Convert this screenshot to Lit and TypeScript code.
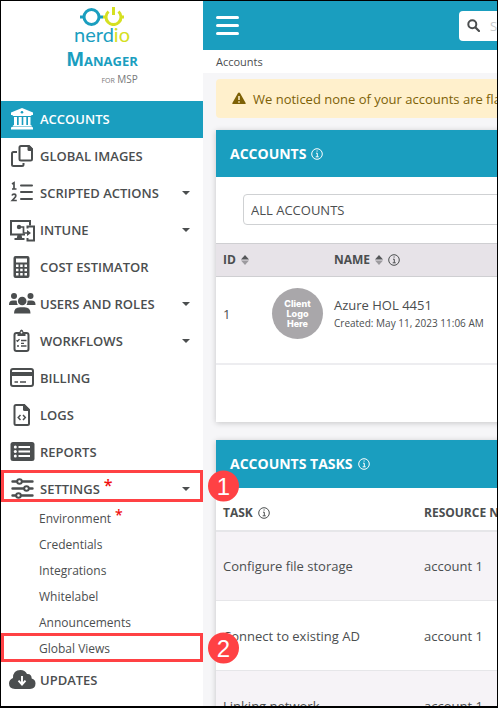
import { LitElement, html, svg, css, nothing } from "lit";
import { customElement, state } from "lit/decorators.js";
import { classMap } from "lit/directives/class-map.js";

const TEAL = "#1a9ebf";
const LIME = "#d5e021";

const icons: Record<string, unknown> = {
  bank: svg`<path fill="currentColor" d="M13 2 L24 6.6 V9 H22.5 Q22.5 10 21.6 10 H4.4 Q3.500 10 3.500 9 H2 V6.600 Z"/>
    <circle cx="13" cy="6.300" r="1.300" fill="#1a9ebf"/>
    <path fill="currentColor" d="M5 11h3v8h1.700v-8h3v8h1.600v-8h3v8h1.700v-8h2.500v8q1.500 0 1.500 1.500H3.600Q3.600 19 5 19ZM3 21h20q1 0 1 1v1.500H2V22q0-1 1-1Z"/>`,
  copy: svg`<g fill="none" stroke="currentColor" stroke-width="2" stroke-linejoin="round">
    <path d="M12 3h8l3 3v10q0 1.500-1.500 1.500H12q-1.500 0-1.500-1.500V4.500Q10.500 3 12 3Z"/>
    <path d="M8 9H4.500Q3 9 3 10.500v11Q3 23 4.500 23H13q1.500 0 1.500-1.500V20"/></g>
    <path fill="currentColor" d="M18.500 2.500h2L24 6v2h-4q-1.500 0-1.500-1.500Z"/>`,
  list: svg`<path d="M12 5.500h11M12 12h11M12 19h11" stroke="currentColor" stroke-width="2" stroke-linecap="round"/>
    <path d="M3 4l2-1.200v6M3 9h4.500M3 15.500q.500-1.300 2-1.300 1.800 0 1.800 1.600 0 1-1.300 2.200L3.300 20.500h4.500" fill="none" stroke="currentColor" stroke-width="1.700"/>`,
  devices: svg`<g fill="none" stroke="currentColor" stroke-width="2"><path d="M16 17.500H2V4h19v4.500"/><path d="M18.500 11.500V9.500H25V23.500h-6.500V21"/></g>
    <path d="M10 10h4.500v6h4" fill="none" stroke="currentColor" stroke-width="1.700"/>
    <circle cx="10" cy="10" r="2.200" fill="currentColor"/><path fill="currentColor" d="M18 13l4 3-4 3ZM8.500 18h4l.700 3h2.300v2H5.500v-2h2.300Z"/>`,
  calc: svg`<path fill="currentColor" fill-rule="evenodd" d="M6.500 2h12q2 0 2 2v18q0 2-2 2h-12q-2 0-2-2V4q0-2 2-2ZM7 4.500v4h11v-4ZM7 10.500V13h2.500v-2.500ZM11.200 10.500V13h2.500v-2.500ZM15.500 10.500V13H18v-2.500ZM7 14.700v2.500h2.500v-2.500ZM11.200 14.700v2.500h2.500v-2.500ZM15.500 14.700v2.500H18v-2.500ZM7 19v2.500h2.500V19ZM11.200 19v2.500h2.500V19ZM15.500 19v2.500H18V19Z"/>`,
  users: svg`<g fill="currentColor"><circle cx="5" cy="5" r="3"/><circle cx="21.500" cy="5" r="3"/><circle cx="13.200" cy="10" r="4.300"/>
    <path d="M0 13.500Q0 9.500 4 9.500h2.500q.800 0 1.300.300-.200 2.500 1 4.200H0ZM26.500 13.500q0-4-4-4H20q-.800 0-1.500.300.200 2.500-1 4.200h9ZM5 22.500Q5 16.200 11 16.200h4.500q6 0 6 6.300Z"/></g>`,
  clipboard: svg`<rect x="5.500" y="5" width="14" height="18" rx="2" fill="none" stroke="currentColor" stroke-width="2"/>
    <path fill="currentColor" d="M8.500 4h2q.500-2.500 2-2.500t2 2.500h2v4h-8Z"/><circle cx="12.500" cy="4.500" r=".900" fill="#fff"/>
    <path d="M7.500 12.300l1 1 2-2.200M12 12.500h5.500M12 18h5.500M8 18h2M12 15.300h3" fill="none" stroke="currentColor" stroke-width="1.300"/>`,
  card: svg`<rect x="2" y="4" width="22" height="17" rx="2" fill="none" stroke="currentColor" stroke-width="2"/><path fill="currentColor" d="M2 7h22v4H2Z"/><path d="M5.500 17h3.500M11 17h6" stroke="currentColor" stroke-width="1.700"/>`,
  code: svg`<path d="M7 3h8l5 5v13.500q0 1.500-1.500 1.500H7q-1.500 0-1.500-1.500v-17Q5.500 3 7 3Z" fill="none" stroke="currentColor" stroke-width="2"/><path fill="currentColor" d="M14 2h1.500L21 7.500V9h-5.500Q14 9 14 7.500Z"/><path d="M11.500 13l-2.300 2.500 2.300 2.500M14 13l2.300 2.500L14 18" fill="none" stroke="currentColor" stroke-width="1.500"/>`,
  report: svg`<rect x="1.500" y="3" width="24" height="19" rx="2.500" fill="currentColor"/><g fill="#fff"><circle cx="6.300" cy="8" r="1.500"/><circle cx="6.300" cy="12.500" r="1.500"/><circle cx="6.300" cy="17" r="1.500"/><path d="M9.500 7H21v2H9.500ZM9.500 11.500H21v2H9.500ZM9.500 16H21v2H9.500Z"/></g>`,
  sliders: svg`<path d="M3.500 5.500h20M3.500 12.500h20M3.500 19.500h20" stroke="currentColor" stroke-width="2.400" stroke-linecap="round"/><g fill="#fff" stroke="currentColor" stroke-width="2"><circle cx="10.500" cy="5.500" r="2.300"/><circle cx="17.500" cy="12.500" r="2.300"/><circle cx="9.500" cy="19.500" r="2.300"/></g>`,
  cloud: svg`<path fill="currentColor" d="M6 22Q0 21.500 0 16.500 0 12.500 4 11 4 3 11.500 3q4.500 0 6.500 4 4.500-.500 4.700 4.500Q26.500 12.500 26.500 16.500q0 5-5.500 5.500Z"/><path d="M13 9v8M9.500 13.700L13 17.500l3.500-3.800" fill="none" stroke="#fff" stroke-width="1.900"/>`,
};

interface NavItem {
  label: string;
  icon: string;
  active?: boolean;
  menu?: boolean;
  starred?: boolean;
  step?: number;
}

const navTop: NavItem[] = [
  { label: "ACCOUNTS", icon: "bank", active: true },
  { label: "GLOBAL IMAGES", icon: "copy" },
  { label: "SCRIPTED ACTIONS", icon: "list", menu: true },
  { label: "INTUNE", icon: "devices", menu: true },
  { label: "COST ESTIMATOR", icon: "calc" },
  { label: "USERS AND ROLES", icon: "users", menu: true },
  { label: "WORKFLOWS", icon: "clipboard", menu: true },
  { label: "BILLING", icon: "card" },
  { label: "LOGS", icon: "code" },
  { label: "REPORTS", icon: "report" },
  { label: "SETTINGS", icon: "sliders", menu: true, starred: true, step: 1 },
];

const settings = [
  { label: "Environment", starred: true },
  { label: "Credentials" },
  { label: "Integrations" },
  { label: "Whitelabel" },
  { label: "Announcements" },
  { label: "Global Views", step: 2 },
] as { label: string; starred?: boolean; step?: number }[];

@customElement("side-nav")
class SideNav extends LitElement {
  @state() private open = true;

  static styles = css`
    :host { display: block; background: #fff; color: #4b4e4f; }
    ul { list-style: none; margin: 0; padding: 0; }
    .brand { display: flex; flex-direction: column; align-items: center; height: 100px; box-sizing: border-box; padding-top: 5px; }
    .glyph { display: block; width: 44px; height: 20px; }
    .word { font: 20px/20px Lato, sans-serif; color: #1a9ebf; margin-top: -2px; }
    .word .lime { color: #d5e021; }
    .product { display: flex; flex-direction: column; align-items: flex-end; font-variant: small-caps; margin-top: 3px; }
    .name { font-size: 19px; line-height: 24px; font-weight: 700; color: #1a9ebf; }
    .edition { font-size: 10px; line-height: 16px; color: #77797a; }
    .row { position: relative; }
    .link {
      display: flex; align-items: center; width: 100%; height: 37px; box-sizing: border-box;
      padding: 0 13px 2px 8px; border: 0; background: none; color: inherit; text-decoration: none;
      font: 600 13px/20px "Open Sans", sans-serif; text-align: left;
    }
    .active { background: #1a9ebf; color: #fff; }
    .icon { width: 27px; height: 26px; margin-right: 4px; flex: none; }
    .star { color: #f01010; font-size: 16px; line-height: 16px; font-weight: 600; margin: 0 0 8px 4px; }
    .caret { margin-left: auto; border: 4px solid transparent; border-top-color: currentColor; border-bottom: 0; }
    .sub { margin-top: -2px; }
    .child { display: flex; align-items: center; height: 26px; padding-left: 38px; color: inherit; text-decoration: none; font-size: 12px; }
    .child .star { font-size: 14px; }
    .ring { position: absolute; inset: -1px 0 6px 0; border: 3px solid #ff4144; pointer-events: none; }
    .sub .ring { inset: -3px 0 0 0; }
    .step {
      position: absolute; left: 100%; top: 50%; width: 31px; height: 31px; margin-left: 8px; transform: translateY(-50%);
      border-radius: 50%; background: #ff4144; color: #fff; font: 24px/31px "Liberation Sans", sans-serif; text-align: center;
    }
  `;

  private marker(step?: number) {
    return step ? html`<span class="ring"><span class="step">${step}</span></span>` : nothing;
  }

  private item(i: NavItem) {
    const inner = html`<svg class="icon" viewBox="0 0 27 26" aria-hidden="true">${icons[i.icon]}</svg>
      <span>${i.label}</span>${i.starred ? html`<span class="star">*</span>` : nothing}${i.menu ? html`<span class="caret"></span>` : nothing}`;
    return html`<li class="row">
      ${i.menu
        ? html`<button class="link" @click=${() => { if (i.step) this.open = !this.open; }}>${inner}</button>`
        : html`<a class=${classMap({ link: true, active: !!i.active })} href="#">${inner}</a>`}
      ${this.marker(i.step)}
    </li>`;
  }

  render() {
    return html`
      <div class="brand">
        <svg class="glyph" viewBox="0 0 44 20" aria-hidden="true">
          <g fill="none" stroke-width="3"><circle cx="11.500" cy="11" r="7.500" stroke=${TEAL}/><path d="M0 11h4M19 11h4" stroke=${TEAL}/>
          <path d="M28.500 5.500A7.500 7.500 0 1 0 38.500 5.500" stroke=${LIME}/><path d="M33.500 1v8M23 11h3M41 11h3" stroke=${LIME}/></g>
        </svg>
        <div class="word">nerd<span class="lime">io</span></div>
        <div class="product"><span class="name">Manager</span><span class="edition">for MSP</span></div>
      </div>
      <nav>
        <ul>
          ${navTop.map((i) => this.item(i))}
          ${this.open
            ? html`<li><ul class="sub">
                ${settings.map((s) => html`<li class="row"><a class="child" href="#">${s.label}${s.starred ? html`<span class="star">*</span>` : nothing}</a>${this.marker(s.step)}</li>`)}
              </ul></li>`
            : nothing}
          ${this.item({ label: "UPDATES", icon: "cloud" })}
        </ul>
      </nav>`;
  }
}

@customElement("app-root")
class AppRoot extends LitElement {
  static styles = css`
    :host {
      display: grid; grid-template-columns: 202px 1fr; height: 100vh; box-sizing: border-box; overflow: hidden;
      border: 1px solid #000; border-bottom-width: 2px; background: #f6f6f8; color: #4b4e4f;
      font-family: "Open Sans", sans-serif; font-size: 13px; line-height: 20px;
    }
    side-nav { position: relative; z-index: 1; min-height: 100%; }
    .main { overflow: hidden; }
    .page { min-width: 720px; }
    .top { display: flex; align-items: center; height: 49px; padding: 0 13px; background: #1a9ebf; }
    .burger { border: 0; padding: 0; background: none; display: grid; gap: 5px; width: 23px; }
    .burger span { height: 3px; border-radius: 2px; background: #fff; }
    .tools { flex: 1; display: flex; padding-left: 220px; }
    .search { display: flex; align-items: center; gap: 10px; width: 220px; height: 30px; padding-left: 8px; box-sizing: border-box; background: #fff; border-radius: 4px; }
    .search svg { width: 13px; height: 13px; flex: none; }
    .search input { border: 0; outline: 0; padding: 0; min-width: 0; flex: 1; background: none; font: inherit; }
    .search input::placeholder { color: #c9cbcc; }
    .crumbs { height: 23px; padding-left: 13px; background: #fff; font-size: 11px; line-height: 23px; }
    .content { display: grid; gap: 18px; padding: 6px 13px 0; }
    .alert { display: flex; align-items: center; gap: 7px; height: 39px; margin-bottom: -6px; padding-left: 16px; border-radius: 4px; background: #fff0cc; color: #7d6106; font-size: 13px; }
    .alert svg { width: 14px; height: 13px; }
    .card { background: #fff; box-shadow: 0 1px 6px #0003; }
    .head { display: flex; align-items: center; gap: 5px; margin: 0; height: 47px; padding-left: 14px; background: #1a9ebf; color: #fff; font-size: 14px; font-weight: 700; }
    .tall { height: 48px; }
    .info { width: 12px; height: 12px; flex: none; }
    .filter { padding: 17px 27px 18px; }
    .filter select { display: block; width: 100%; height: 31px; padding: 0 7px; border: 1px solid #cfd1d3; border-radius: 4px; background: #fff; color: inherit; font: 13px/20px "Open Sans", sans-serif; appearance: none; }
    table { width: 100%; border-collapse: collapse; table-layout: fixed; }
    th, td { padding: 0 7px; text-align: left; }
    th { font-weight: 700; font-size: 12px; }
    .flex { display: flex; align-items: center; gap: 5px; }
    .sort { width: 8px; height: 10px; }
    .accounts th { height: 33px; background: #e7e3e8; border-top: 1px solid #cfcfd2; border-bottom: 1px solid #cfcfd2; box-sizing: border-box; }
    .accounts td { height: 87px; box-sizing: border-box; border-bottom: 2px solid #ededf0; padding-bottom: 12px; }
    .id { width: 49px; box-sizing: border-box; }
    .pic { width: 62px; box-sizing: border-box; }
    .logo { display: grid; place-content: center; width: 51px; height: 51px; border-radius: 50%; background: #a9a7aa; color: #fff; font: 800 9px/10px Inter, sans-serif; text-align: center; }
    .who small { display: block; font-size: 10px; line-height: 17px; }
    .foot { height: 57px; }
    .tasks th { height: 43px; box-sizing: border-box; border-bottom: 2px solid #e6e6e9; padding-top: 8px; }
    .tasks td { height: 70px; box-sizing: border-box; border-bottom: 1px solid #e6e6e9; }
    .tasks tbody tr:nth-child(odd) { background: #f6f3f7; }
    .task { width: 201px; box-sizing: border-box; }
  `;

  private info = html`<svg class="info" viewBox="0 0 12 12" aria-hidden="true"><circle cx="6" cy="6" r="5.300" fill="none" stroke="currentColor"/><path d="M5 5.200h1.300v3.500M4.700 8.800h3M5.500 3h1.200" fill="none" stroke="currentColor"/></svg>`;
  private sort = html`<svg class="sort" viewBox="0 0 8 10" aria-hidden="true"><path d="M0 4.500L4 0l4 4.500Z" fill="#555759"/><path d="M0 5.500L4 10l4-4.500Z" fill="#9c9a9e"/></svg>`;

  render() {
    return html`
      <side-nav></side-nav>
      <div class="main"><div class="page">
        <header class="top">
          <button class="burger" aria-label="Toggle menu"><span></span><span></span><span></span></button>
          <div class="tools"><label class="search">
            <svg viewBox="0 0 13 13" aria-hidden="true"><circle cx="5.300" cy="5.300" r="4" fill="none" stroke="#4b4e4f" stroke-width="2"/><path d="M8.500 8.500l3.500 3.500" stroke="#4b4e4f" stroke-width="2.200" stroke-linecap="round"/></svg>
            <input type="search" placeholder="Search" aria-label="Search">
          </label></div>
        </header>
        <div class="crumbs">Accounts</div>
        <main class="content">
          <div class="alert" role="alert">
            <svg viewBox="0 0 14 13" aria-hidden="true"><path fill="currentColor" d="M7 0.500q.700 0 1 .600l5.500 9.700q.600 1.200-.700 1.200H1.200Q-.100 12 .500 10.800L6 1.100Q6.300.500 7 .500Z"/><path d="M7 4v4M7 9.300v1.500" stroke="#fff0cc" stroke-width="1.500"/></svg>
            <span>We noticed none of your accounts are flagged</span>
          </div>
          <section class="card">
            <h2 class="head">ACCOUNTS ${this.info}</h2>
            <div class="filter"><select aria-label="Account filter"><option>ALL ACCOUNTS</option></select></div>
            <table class="accounts">
              <thead><tr><th class="id"><span class="flex">ID ${this.sort}</span></th><th class="pic"></th><th><span class="flex">NAME ${this.sort} ${this.info}</span></th></tr></thead>
              <tbody><tr><td>1</td><td><div class="logo">Client<br>Logo<br>Here</div></td><td><div class="who">Azure HOL 4451<small>Created: May 11, 2023 11:06 AM</small></div></td></tr></tbody>
            </table>
            <div class="foot"></div>
          </section>
          <section class="card">
            <h2 class="head tall">ACCOUNTS TASKS ${this.info}</h2>
            <table class="tasks">
              <thead><tr><th class="task"><span class="flex">TASK ${this.info}</span></th><th>RESOURCE NAME</th></tr></thead>
              <tbody>
                ${["Configure file storage", "Connect to existing AD", "Linking network"].map((t) => html`<tr><td>${t}</td><td>account 1</td></tr>`)}
              </tbody>
            </table>
          </section>
        </main>
      </div></div>`;
  }
}
